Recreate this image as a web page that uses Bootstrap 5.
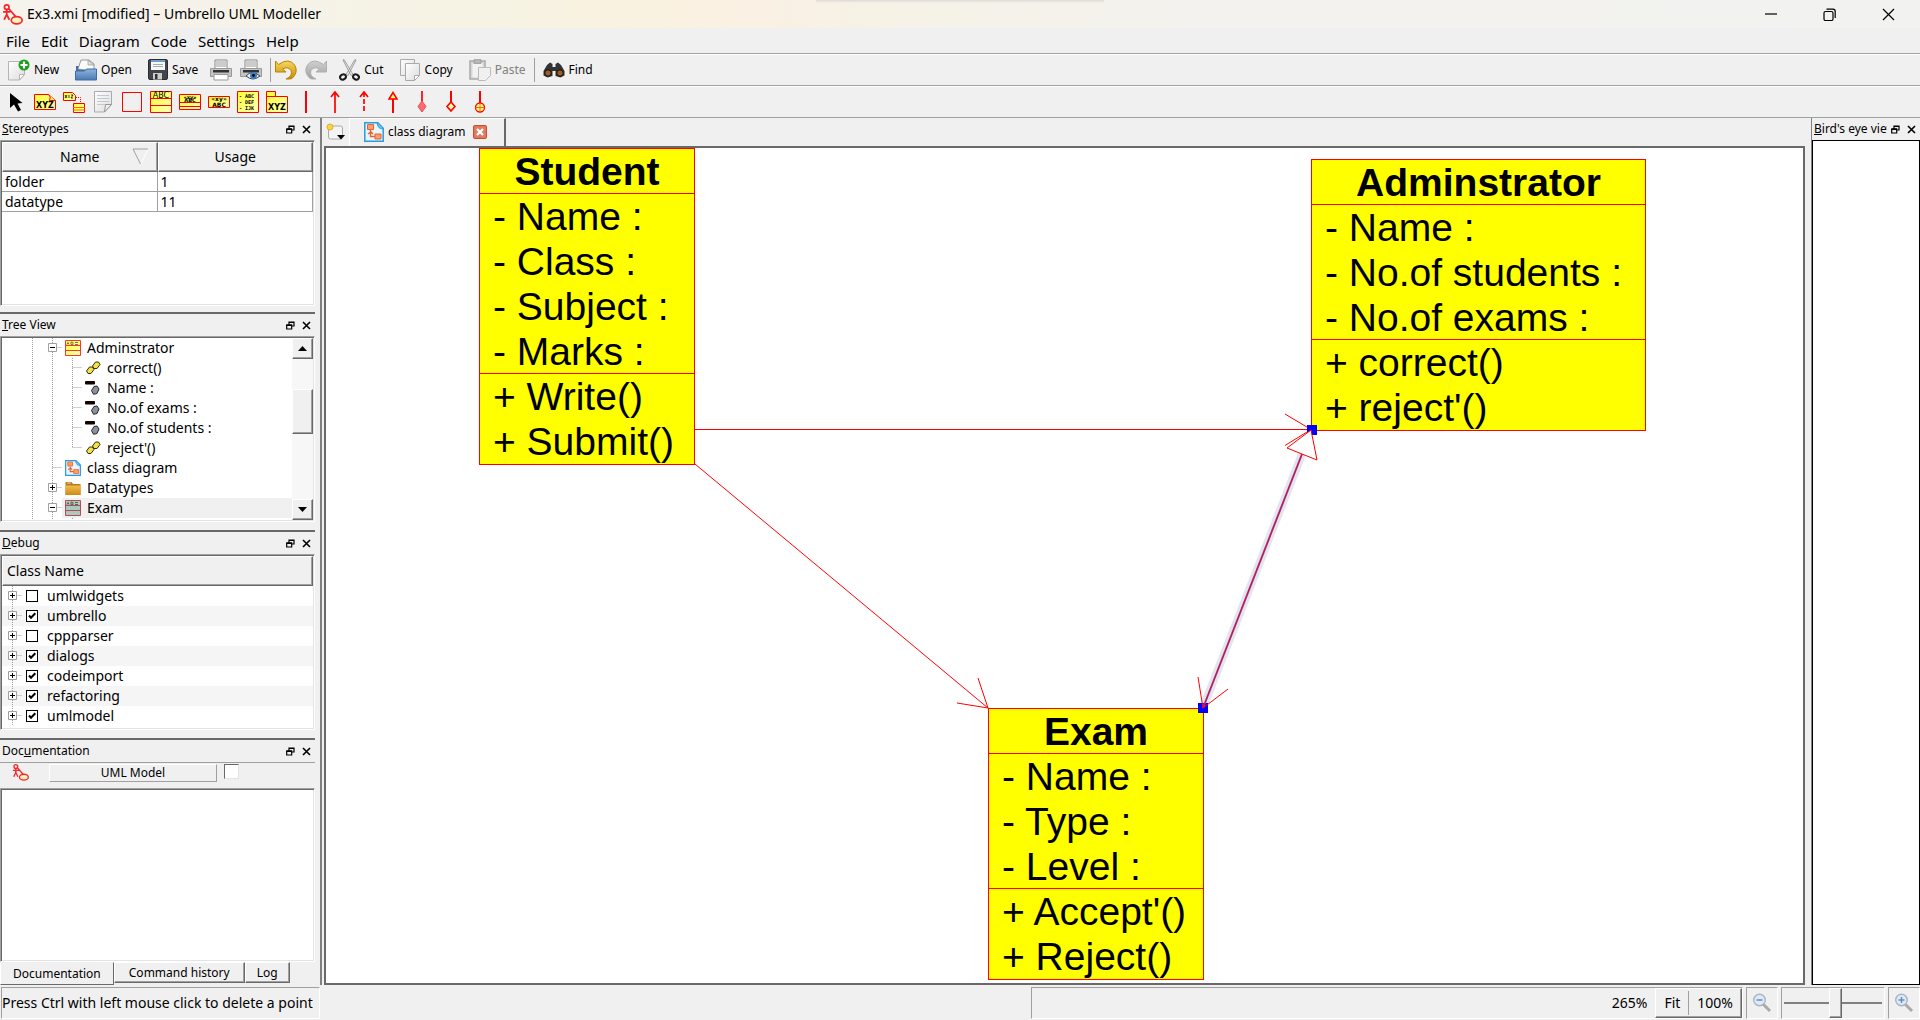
<!DOCTYPE html>
<html lang="en">
<head>
<meta charset="utf-8">
<meta name="viewport" content="width=device-width, initial-scale=1">
<title>Ex3.xmi [modified] – Umbrello UML Modeller</title>
<link href="https://cdn.jsdelivr.net/npm/bootstrap@5.3.0/dist/css/bootstrap.min.css" rel="stylesheet">
<style>
  body { background: #f0f0f0; color: #000; font: 14px/20px "Noto Sans", "Open Sans", sans-serif; }
  svg { display: block; flex: none; }
  .titlebar { height: 28px; padding: 0 2px; background: linear-gradient(#dcdad6, transparent) 50% 0/15% 3px no-repeat, linear-gradient(90deg, #f6f2ee, #f6f3e4 25%, #faf2e0 33%, #faf0e4 40%, #f6f2e6 46%, #f3f2ee 62%, #f2f2f0); }
  .titlebar .caption { font-size: 14px; }
  .winbtn { width: 59px; height: 28px; }
  .flat { border: 0; background: none; padding: 0; color: #000; display: flex; align-items: center; }
  .menus { height: 25px; padding-left: 6px; gap: 11px; }
  .menus a { color: #000; text-decoration: none; font-size: 15px; }
  .tools { height: 32px; border-top: 1px solid #a0a0a0; box-shadow: inset 0 1px #fff; font-size: 12px; }
  .tools .flat { font-size: 12px; gap: 4px; }
  .tools .off { color: #808080; }
  .shapes { padding-left: 5px; gap: 7px; }
  .vsep { width: 1px; height: 24px; background: #a0a0a0; }
  .workarea { min-height: 0; border-top: 1px solid #a0a0a0; }
  .leftdock { width: 320px; padding-right: 5px; }
  .dock { display: flex; flex-direction: column; border-top: 2px solid #696969; min-height: 0; }
  .dock-stereo { flex: 194 1 194px; border-top: 0; padding-bottom: 6px; }
  .dock-tree { flex: 218 1 218px; padding-bottom: 8px; }
  .dock-debug { flex: 208 1 208px; padding-bottom: 8px; }
  .dock-doc { flex: 247 1 247px; }
  .dock-head { height: 22px; padding: 0 1px 0 2px; font-size: 12px; flex: none; }
  .dock-head .flat { width: 16px; height: 16px; justify-content: center; }
  .sunken { background: #fff; border: 1px solid; border-color: #a0a0a0 #fff #fff #a0a0a0; box-shadow: inset 1px 1px #696969, inset -1px -1px #e3e3e3; padding: 1px; overflow: hidden; }
  .raised { background: #f0f0f0; border: 1px solid; border-color: #fff #696969 #696969 #fff; box-shadow: inset -1px -1px #a0a0a0; }
  .stereo { width: 100%; border-collapse: separate; border-spacing: 0; table-layout: fixed; }
  .stereo th { height: 30px; font-weight: 400; text-align: center; padding: 0; position: relative; }
  .stereo th svg { position: absolute; right: 8px; top: 5px; }
  .stereo td { height: 20px; line-height: 19px; padding: 0 3px; border-right: 1px solid #a0a0a0; border-bottom: 1px solid #a0a0a0; }
  .trow { height: 20px; white-space: nowrap; }
  .trow .indent { width: 20px; }
  .trow .ticon { margin: 0 6px 0 3px; }
  .hot { background: #f0f0f0; }
  .sbar { width: 21px; background: #f7f7f7; }
  .sbar button { width: 21px; height: 21px; padding: 0; display: flex; align-items: center; justify-content: center; }
  .sbar .before { flex: 31; }
  .sbar .thumb { flex: 45; }
  .sbar .after { flex: 68; }
  .tick { appearance: none; width: 12px; height: 12px; margin: 0 9px 0 4px; border: 1px solid #000; background: #fff; flex: none; }
  .tick:checked { background: #fff url("data:image/svg+xml,%3Csvg xmlns='http://www.w3.org/2000/svg' viewBox='0 0 10 10'%3E%3Cpath d='M2 4.5l2 2.2 4.3-4.4' fill='none' stroke='%23000' stroke-width='2'/%3E%3C/svg%3E"); }
  .dbg-head { height: 30px; }
  .dbg { height: 20px; }
  .dbg:nth-child(odd) { background: #f5f5f5; }
  .docrow { height: 26px; border-top: 1px solid #a0a0a0; padding: 1px 0 0 12px; gap: 20px; flex: none; }
  .docbtn { width: 168px; height: 18px; padding: 0; border: 1px solid; border-color: #fff #a0a0a0 #a0a0a0 #fff; background: #f0f0f0; font-size: 12px; line-height: 16px; }
  .doccheck { appearance: none; width: 15px; height: 15px; margin: 0 0 0 -13px; background: #fff; border: 1px solid; border-color: #696969 #e3e3e3 #e3e3e3 #696969; }
  .docarea { resize: none; width: 100%; display: block; }
  .dtabs { height: 23px; flex: none; }
  .dtab { font-size: 12px; height: 21px; line-height: 18px; padding: 0 14px; }
  .dtab:last-child { padding: 0 11px; }
  .dtab.cur { height: 23px; line-height: 20px; border: 1px solid; border-color: transparent #696969 #696969 #fff; background: #f0f0f0; padding: 0 12px; }
  .central { border-left: 2px solid #808080; }
  .tabstrip { height: 28px; padding-left: 4px; }
  .doctab { height: 28px; border-left: 1px solid #fff; border-top: 1px solid #fff; border-right: 2px solid #696969; padding: 0 17px 1px 14px; font-size: 12px; gap: 4px; }
  .view { margin-left: 2px; border: 2px solid #696969; background: #fff; position: relative; overflow: hidden; }
  .wires { position: absolute; left: 0; top: 0; width: 100%; height: 100%; overflow: visible; }
  .uml { position: absolute; background: #ff0; border: 1px solid #f00; font: 39px/45px "Liberation Sans", Arial, sans-serif; white-space: pre; }
  .uml > div { padding-left: 13px; border-top: 1px solid #f00; margin-top: -1px; }
  .uml > .cname { font-weight: 700; text-align: center; padding: 0; border: 0; margin: 0; }
  .uml-student { left: 153px; top: 0; width: 216px; }
  .uml-admin { left: 985px; top: 11px; width: 335px; }
  .uml-exam { left: 662px; top: 560px; width: 216px; }
  .bird { width: 115px; padding-left: 6px; }
  .bird .dock { border-top: 0; border-left: 1px solid #808080; }
  .birdview { border: 1px solid #000; background: #fff; }
  .status { height: 35px; padding: 2px 0 1px 1px; gap: 3px; }
  .cell { border: 1px solid; border-color: #a0a0a0 #fff #fff #a0a0a0; height: 32px; }
  .hint { width: 319px; }
  .zoomcell { width: 712px; }
  .glass { width: 32px; }
  .zoomer { width: 104px; }
  .zoomer input { appearance: none; width: 100%; height: 30px; margin: 0; background: linear-gradient(#808080, #808080) center/98px 2px no-repeat; }
  .zoomer input::-webkit-slider-thumb { appearance: none; width: 13px; height: 30px; background: #f0f0f0; border: 1px solid; border-color: #fff #696969 #696969 #fff; box-shadow: inset -1px -1px #a0a0a0; }
</style>
<script src="https://cdn.jsdelivr.net/npm/bootstrap@5.3.0/dist/js/bootstrap.bundle.min.js"></script>
</head>
<body class="vh-100 d-flex flex-column overflow-hidden">

<svg width="0" height="0" class="position-absolute" aria-hidden="true">
  <defs>
    <linearGradient id="yel" x1="0" y1="0" x2="1" y2="1"><stop offset="0" stop-color="#ffff30"/><stop offset="1" stop-color="#ffffb8"/></linearGradient>
    <linearGradient id="paper" x1="0" y1="0" x2="1" y2="1"><stop offset="0" stop-color="#fff"/><stop offset="1" stop-color="#dcdcdc"/></linearGradient>
    <linearGradient id="blue" x1="0" y1="0" x2="0" y2="1"><stop offset="0" stop-color="#8fb4dc"/><stop offset="1" stop-color="#4a7ab4"/></linearGradient>
    <linearGradient id="gold" x1="0" y1="0" x2="0" y2="1"><stop offset="0" stop-color="#f8d860"/><stop offset="1" stop-color="#c88a00"/></linearGradient>
    <linearGradient id="orange" x1="0" y1="0" x2="0" y2="1"><stop offset="0" stop-color="#f2bc50"/><stop offset="1" stop-color="#cf8a14"/></linearGradient>
    <linearGradient id="grey" x1="0" y1="0" x2="0" y2="1"><stop offset="0" stop-color="#d0d0d0"/><stop offset="1" stop-color="#a0a0a0"/></linearGradient>
  </defs>
  <symbol id="i-app" viewBox="0 0 20 20"><g fill="none" stroke="#f3262a" stroke-width="1.6"><circle cx="4.500" cy="3" r="2.200"/><path d="M4.500 5v5M1 7.500h7M4.500 10L2 15M4.500 10L7 15M6.500 4.500L13 12"/><ellipse cx="14" cy="15.500" rx="5.200" ry="3.400" fill="#fff4c0"/></g></symbol>
  <symbol id="i-float" viewBox="0 0 9 9"><path d="M3 1h5v4H3zM3 1.500h5" fill="none" stroke="#000" stroke-width="1.200"/><path d="M.7 4h5v4h-5z" fill="#f0f0f0" stroke="#000" stroke-width="1.200"/><path d="M.5 4.200h5.500" stroke="#000" stroke-width="1.600"/></symbol>
  <symbol id="i-x" viewBox="0 0 9 9"><path d="M1 1l7 7M8 1L1 8" stroke="#000" stroke-width="1.600"/></symbol>
  <symbol id="g-v" viewBox="0 0 20 20"><path d="M10.500 0v20" stroke="#a0a0a0" stroke-dasharray="1 1"/></symbol>
  <symbol id="g-t" viewBox="0 0 20 20"><path d="M10.500 0v20M10.500 9.500H20" stroke="#a0a0a0" stroke-dasharray="1 1"/></symbol>
  <symbol id="g-l" viewBox="0 0 20 20"><path d="M10.500 0v10M10.500 9.500H20" stroke="#a0a0a0" stroke-dasharray="1 1"/></symbol>
  <symbol id="g-minus" viewBox="0 0 20 20"><path d="M10.500 0v20M10.500 9.500H20" stroke="#a0a0a0" stroke-dasharray="1 1"/><path d="M6.500 5.500h8v8h-8z" fill="#fff" stroke="#a0a0a0"/><path d="M8 9.500h5" stroke="#000"/></symbol>
  <symbol id="g-plus" viewBox="0 0 20 20"><path d="M10.500 0v20M10.500 9.500H20" stroke="#a0a0a0" stroke-dasharray="1 1"/><path d="M6.500 5.500h8v8h-8z" fill="#fff" stroke="#a0a0a0"/><path d="M8 9.500h5M10.500 7v5" stroke="#000"/></symbol>
  <symbol id="t-class" viewBox="0 0 16 16"><path d="M.5.500h15v15H.5z" fill="url(#yel)" stroke="#f33"/><path d="M0 5.500h16M0 10.500h16" stroke="#f33"/><path d="M2 4.500l1-2 1 2M6 2v2.500h2V2.500zM10 2.500h3M10 4.500h3" stroke="#775" fill="none"/></symbol>
  <symbol id="t-exam" viewBox="0 0 16 16"><path d="M.5.500h15v15H.5z" fill="#a9cbbd" stroke="#b64a56"/><path d="M0 5.500h16M0 10.500h16" stroke="#b64a56"/><path d="M2 4.500l1-2 1 2M6 2v2.500h2V2.500zM10 2.500h3M10 4.500h3" stroke="#565" fill="none"/></symbol>
  <symbol id="t-op" viewBox="0 0 16 16"><path d="M7.500 6l3-4h3l1.500 2.500-3 4H9zM1.500 11l3-4h3L9 9.500l-3 4H3z" fill="#f4e04a" stroke="#3a3000"/></symbol>
  <symbol id="t-attr" viewBox="0 0 16 16"><rect x="0" y="1" width="10" height="3.500" rx="1" fill="#100"/><path d="M6.500 10.500l2.500-4 3-.500 2 3-2 4.500-3.500.800z" fill="#8f8fa0" stroke="#222"/></symbol>
  <symbol id="t-diag" viewBox="0 0 20 20"><path d="M.8.800h13l5.400 5.400v13H.8z" fill="#e8f5fd" stroke="#2a9be0" stroke-width="1.500"/><path d="M13 .8c1 3 1 6 6 6" fill="#6ec0f4" stroke="#2a9be0"/><path d="M3.500 2.500h6v5h-6zM11 12h6v5h-6z" fill="#f7a070" stroke="#e8622a"/><path d="M6.500 8v6.500H11M4 12l3-2 2 2" fill="none" stroke="#e8622a" stroke-width="1.400"/></symbol>
  <symbol id="t-folder" viewBox="0 0 16 16"><path d="M.5 2h6l1.500 2h7.500v11H.5z" fill="#b87a1c"/><path d="M.5 5.500h15V15H.5z" fill="url(#orange)"/><path d="M2 3h4" stroke="#f6d68c"/></symbol>
  <symbol id="i-glass" viewBox="0 0 20 20"><path d="M11 11l7 7" stroke="#aaa" stroke-width="3"/><circle cx="7.500" cy="7" r="5.800" fill="#dcebfa" stroke="#a8b4c0" stroke-width="1.400"/></symbol>
</svg>

<header class="titlebar d-flex align-items-center flex-shrink-0">
  <svg width="21" height="21" class="me-1"><use href="#i-app"/></svg>
  <span class="caption">Ex3.xmi [modified] – Umbrello UML Modeller</span>
  <div class="ms-auto d-flex">
    <button class="flat winbtn justify-content-center" aria-label="Minimize"><svg width="12" height="12"><path d="M0 6h12" stroke="#000" stroke-width="1.200"/></svg></button>
    <button class="flat winbtn justify-content-center" aria-label="Restore"><svg width="13" height="13" fill="none" stroke="#000" stroke-width="1.200"><rect x="1" y="3.500" width="9" height="9" rx="1.500"/><path d="M3.500 1.200h6.500q2.200 0 2.200 2.200v6.500"/></svg></button>
    <button class="flat winbtn justify-content-center" aria-label="Close"><svg width="13" height="13" stroke="#000" stroke-width="1.200"><path d="M1 1l11 11M12 1L1 12"/></svg></button>
  </div>
</header>

<nav class="menus d-flex align-items-center flex-shrink-0">
  <a href="#">File</a><a href="#">Edit</a><a href="#">Diagram</a><a href="#">Code</a><a href="#">Settings</a><a href="#">Help</a>
</nav>

<div class="tools d-flex align-items-center flex-shrink-0 ps-2">
  <button class="flat me-3"><svg width="22" height="22"><path d="M.5 2.500h16v13l-5 5.500H.5z" fill="url(#paper)" stroke="#b4b4b4"/><path d="M16.500 15.500h-5V21z" fill="#fff" stroke="#b4b4b4"/><circle cx="16" cy="6" r="5.500" fill="#18a018"/><path d="M16 2.500v7M12.500 6h7" stroke="#fff" stroke-width="2.200"/></svg>New</button>
  <button class="flat me-3"><svg width="22" height="22"><path d="M1 7h6l2 3h12v11H1z" fill="#3f6ca8"/><path d="M3 10L6 1h8l5 4v7z" fill="#fafafa" stroke="#999"/><path d="M13 1v5h6z" fill="#ddd" stroke="#999" stroke-width=".7"/><path d="M.5 12h9l2-2h10v11H.5z" fill="url(#blue)" stroke="#3f6ca8"/></svg>Open</button>
  <button class="flat me-2"><svg width="20" height="21"><rect x=".5" y=".5" width="19" height="20" rx="1.500" fill="#42464c" stroke="#2a2c30"/><path d="M3 1h14v10H3z" fill="#f4f6f8"/><path d="M3 1h14v2H3z" fill="#6e9ccc"/><path d="M5 5.500h10M5 7.500h10" stroke="#aaa"/><path d="M5 14h9v6.500H5z" fill="#ccc"/><path d="M7 15h2.500v5H7z" fill="#333"/></svg>Save</button>
  <button class="flat ms-1 me-2" aria-label="Print"><svg width="22" height="22"><path d="M5 1h12v9H5z" fill="#fff" stroke="#888"/><path d="M6 3h10M6 5h10M6 7h10" stroke="#999"/><path d="M.5 9.500h21v8H.5z" fill="#c4c4c4" stroke="#999"/><path d="M3 11h16v2.500H3z" fill="#333"/><path d="M4 15.500h14v5.500H4z" fill="#fff" stroke="#999"/></svg></button>
  <button class="flat me-2" aria-label="Print preview"><svg width="22" height="22"><path d="M5 1h12v9H5z" fill="#fff" stroke="#888"/><path d="M6 3h10M6 5h10M6 7h10" stroke="#999"/><path d="M.5 9.500h21v8H.5z" fill="#c4c4c4" stroke="#999"/><path d="M3 11h16v2.500H3z" fill="#333"/><path d="M6 17q6-7 14 0-7 6-14 0z" fill="#eef" stroke="#345"/><circle cx="13.500" cy="16.500" r="3.500" fill="#3a7ec0"/><circle cx="13.500" cy="16.500" r="1.400"/></svg></button>
  <span class="vsep me-1"></span>
  <button class="flat me-2" aria-label="Undo"><svg width="22" height="20"><path d="M.5 1l3 3.500Q14-3 20 5.500q3.500 7-3 13-2 .8-6 .5 7-3 5-8.500-3-4.500-8.500-1.500L11 12H.5z" fill="url(#gold)" stroke="#b88400"/></svg></button>
  <button class="flat me-2" aria-label="Redo"><svg width="22" height="20"><path transform="matrix(-1 0 0 1 22 0)" d="M.5 1l3 3.500Q14-3 20 5.500q3.500 7-3 13-2 .8-6 .5 7-3 5-8.500-3-4.500-8.500-1.500L11 12H.5z" fill="url(#grey)" stroke="#b0b0b0"/></svg></button>
  <button class="flat ms-1 me-3"><svg width="21" height="22"><path d="M4 1l1-.500 9 15-2 1zM17 1l-1-.500-9 15 2 1z" fill="#eee" stroke="#888" stroke-width=".8"/><g fill="none" stroke="#1a1a1a" stroke-width="2"><ellipse cx="4" cy="18" rx="3" ry="2.500" transform="rotate(-25 4 18)"/><ellipse cx="17" cy="18" rx="3" ry="2.500" transform="rotate(25 17 18)"/></g></svg>Cut</button>
  <button class="flat me-3"><svg width="21" height="22"><path d="M.5.500h14v16H.5z" fill="url(#paper)" stroke="#aaa"/><path d="M5.500 4.500h14v12l-5 5h-9z" fill="url(#paper)" stroke="#aaa"/><path d="M19.500 16.500h-5v5z" fill="#fff" stroke="#aaa"/></svg>Copy</button>
  <button class="flat off me-2" disabled><svg width="22" height="22"><path d="M1 2h15v18H1z" fill="#d8d8d8" stroke="#aaa" stroke-width="1.500"/><path d="M3.500 4.500h10v14h-10z" fill="#f2f2f2"/><path d="M5 .8h7v3.500H5z" fill="#bbb" stroke="#999"/><path d="M9.500 8.500h12v8l-5 5h-7z" fill="#f0f0f0" stroke="#bbb"/></svg>Paste</button>
  <span class="vsep me-2"></span>
  <button class="flat"><svg width="22" height="16"><path d="M4 3l3-2.500 2.500 1.500V5h3V2L15 .5 18 3l3.500 6v4.500l-4 2-5-1.500V9h-3v5l-5 1.500-4-2V9z" fill="#333"/><circle cx="5" cy="11" r="3.200" fill="#a35a24" stroke="#111"/><circle cx="17" cy="11" r="3.200" fill="#a35a24" stroke="#111"/></svg>Find</button>
</div>

<div class="tools shapes d-flex align-items-center flex-shrink-0">
  <button class="flat" aria-label="Select"><svg width="22" height="22"><path d="M5 2v15l4-3.500 4 7 3-1.500-3.500-6.500 5-.5z"/></svg></button>
  <button class="flat" aria-label="Note"><svg width="22" height="22"><path d="M.500 3.500h14l7 6v9H.5z" fill="url(#yel)" stroke="#f00"/><path d="M14.500 3.500q3 2 1 6h6" fill="#ffef60" stroke="#f00"/><text x="11" y="16.500" text-anchor="middle" font-family="DejaVu Sans" font-size="8" font-weight="700">XYZ</text></svg></button>
  <button class="flat" aria-label="Anchor"><svg width="22" height="22"><path d="M.500 1.500h9l3 3v5H.5z" fill="url(#yel)" stroke="#f00"/><path d="M2 4l2 3M4 4L2 7M6 4v3M8 4h2L8 7h2" stroke="#000" stroke-width=".8" fill="none"/><path d="M13 6.500h4.500V12" fill="none" stroke="#f00" stroke-dasharray="1 1"/><path d="M10.500 12.500h11v9h-11z" fill="url(#yel)" stroke="#f00"/><path d="M10 16.500h12M10 19h12" stroke="#f60"/></svg></button>
  <button class="flat" aria-label="Text line"><svg width="22" height="22"><path d="M2.500.500h17v13l-7 7.500h-10z" fill="url(#paper)" stroke="#aaa"/><path d="M5 4.500h12M5 7.500h12M5 10.500h12M5 13.500h8" stroke="#c0c8d4"/><path d="M19.500 13.500h-6L12.500 21z" fill="#eee" stroke="#999"/></svg></button>
  <button class="flat" aria-label="Box"><svg width="22" height="22"><path d="M1.500 1.500h19v19h-19z" fill="none" stroke="#f00"/></svg></button>
  <button class="flat" aria-label="Class"><svg width="22" height="22"><path d="M.500.500h21v21H.5z" fill="url(#yel)" stroke="#f00"/><path d="M0 7.500h22M0 14.500h22" stroke="#f00"/><text x="11" y="6.500" text-anchor="middle" font-family="DejaVu Sans" font-size="8">ABC</text></svg></button>
  <button class="flat" aria-label="Interface"><svg width="22" height="22"><path d="M.500 3.500h21v15H.5z" fill="url(#yel)" stroke="#f00"/><path d="M0 11.500h22M0 15.500h22" stroke="#f00"/><text x="11" y="7.500" text-anchor="middle" font-family="DejaVu Sans" font-size="5" font-weight="700">«xy»</text><text x="11" y="11" text-anchor="middle" font-family="DejaVu Sans" font-size="5" font-weight="700">ABC</text></svg></button>
  <button class="flat" aria-label="Datatype"><svg width="22" height="22"><path d="M.500 5.500h21v11H.5z" fill="url(#yel)" stroke="#f00"/><text x="11" y="10" text-anchor="middle" font-family="DejaVu Sans" font-size="6" font-weight="700">«xy»</text><text x="11" y="15.500" text-anchor="middle" font-family="DejaVu Sans" font-size="6" font-weight="700">ABC</text></svg></button>
  <button class="flat" aria-label="Enum"><svg width="22" height="22"><path d="M.500.500h21v21H.5z" fill="url(#yel)" stroke="#f00"/><g font-family="DejaVu Sans Mono" font-size="5" font-weight="700"><text x="2" y="6.500">- ABC</text><text x="2" y="12.500">- DEF</text><text x="2" y="19">- IJK</text></g></svg></button>
  <button class="flat" aria-label="Package"><svg width="22" height="22"><path d="M.500.500h9v5h12v16H.5z" fill="url(#yel)" stroke="#f00"/><path d="M0 5.500h10" stroke="#f00"/><text x="11" y="19" text-anchor="middle" font-family="DejaVu Sans" font-size="8" font-weight="700">XYZ</text></svg></button>
  <button class="flat" aria-label="Association"><svg width="22" height="22"><path d="M11 0v22" stroke="#f00" stroke-width="2"/></svg></button>
  <button class="flat" aria-label="Directed association"><svg width="22" height="22"><path d="M11 1v21M7 6l4-5 4 5" fill="none" stroke="#f00" stroke-width="1.700"/></svg></button>
  <button class="flat" aria-label="Dependency"><svg width="22" height="22"><path d="M11 1v21" stroke="#f00" stroke-width="1.700" stroke-dasharray="5 2"/><path d="M7 6l4-5 4 5" fill="none" stroke="#f00" stroke-width="1.700"/></svg></button>
  <button class="flat" aria-label="Generalization"><svg width="22" height="22"><path d="M11 8v14" stroke="#f00" stroke-width="2"/><path d="M7 8l4-6.500L15 8z" fill="#ff6" stroke="#f00" stroke-width="1.500"/></svg></button>
  <button class="flat" aria-label="Composition"><svg width="22" height="22"><path d="M11 0v12" stroke="#f00" stroke-width="1.700"/><path d="M11 10l4 5.500-4 5.500-4-5.500z" fill="#ff6870" stroke="#e85058"/></svg></button>
  <button class="flat" aria-label="Aggregation"><svg width="22" height="22"><path d="M11 0v12" stroke="#f00" stroke-width="2"/><path d="M11 11l4 4.500-4 4.500-4-4.500z" fill="#ffa" stroke="#f00" stroke-width="1.600"/></svg></button>
  <button class="flat" aria-label="Containment"><svg width="22" height="22"><path d="M11 0v12" stroke="#f00" stroke-width="2"/><circle cx="11" cy="16.500" r="4.500" fill="#ff8" stroke="#f00" stroke-width="1.300"/><path d="M11 12v9M6.500 16.500h9" stroke="#f60"/></svg></button>
</div>

<main class="workarea d-flex flex-grow-1">
  <aside class="leftdock d-flex flex-column flex-shrink-0">
    <section class="dock dock-stereo">
      <div class="dock-head d-flex align-items-center"><span class="me-auto"><u>S</u>tereotypes</span><button class="flat" aria-label="Float"><svg width="9" height="9"><use href="#i-float"/></svg></button><button class="flat" aria-label="Close"><svg width="9" height="9"><use href="#i-x"/></svg></button></div>
      <div class="sunken flex-grow-1">
        <table class="stereo">
          <thead><tr><th class="raised">Name<svg width="17" height="17" fill="none"><path d="M16 1L9 16" stroke="#fff"/><path d="M16 1H1l7.500 15" stroke="#a0a0a0"/></svg></th><th class="raised">Usage</th></tr></thead>
          <tbody><tr><td>folder</td><td>1</td></tr><tr><td>datatype</td><td>11</td></tr></tbody>
        </table>
      </div>
    </section>
    <section class="dock dock-tree">
      <div class="dock-head d-flex align-items-center"><span class="me-auto"><u>T</u>ree View</span><button class="flat" aria-label="Float"><svg width="9" height="9"><use href="#i-float"/></svg></button><button class="flat" aria-label="Close"><svg width="9" height="9"><use href="#i-x"/></svg></button></div>
      <div class="sunken flex-fill d-flex overflow-hidden">
        <div class="flex-grow-1 overflow-hidden" id="tree"></div>
        <div class="sbar d-flex flex-column">
          <button class="raised" aria-label="Scroll up"><svg width="9" height="5"><path d="M0 5l4.500-5L9 5z"/></svg></button>
          <div class="before"></div><div class="raised thumb"></div><div class="after"></div>
          <button class="raised" aria-label="Scroll down"><svg width="9" height="5"><path d="M0 0l4.500 5L9 0z"/></svg></button>
        </div>
      </div>
    </section>
    <section class="dock dock-debug">
      <div class="dock-head d-flex align-items-center"><span class="me-auto"><u>D</u>ebug</span><button class="flat" aria-label="Float"><svg width="9" height="9"><use href="#i-float"/></svg></button><button class="flat" aria-label="Close"><svg width="9" height="9"><use href="#i-x"/></svg></button></div>
      <div class="sunken flex-grow-1" id="debug"><div class="raised dbg-head ps-1 d-flex align-items-center">Class Name</div></div>
    </section>
    <section class="dock dock-doc">
      <div class="dock-head d-flex align-items-center"><span class="me-auto">Doc<u>u</u>mentation</span><button class="flat" aria-label="Float"><svg width="9" height="9"><use href="#i-float"/></svg></button><button class="flat" aria-label="Close"><svg width="9" height="9"><use href="#i-x"/></svg></button></div>
      <div class="docrow d-flex"><svg width="17" height="17"><use href="#i-app"/></svg><button class="docbtn">UML Model</button><input type="checkbox" class="doccheck" aria-label="Modified"></div>
      <textarea class="sunken flex-grow-1 docarea" aria-label="Documentation"></textarea>
      <div class="d-flex dtabs"><button class="dtab cur">Documentation</button><button class="dtab raised">Command history</button><button class="dtab raised">Log</button></div>
    </section>
  </aside>

  <section class="central d-flex flex-column flex-grow-1">
    <div class="tabstrip d-flex align-items-center flex-shrink-0">
      <button class="flat" aria-label="New diagram"><svg width="23" height="18"><rect x="2.500" y="3" width="14" height="13" rx="2" fill="#f4f4f4" stroke="#aaa"/><circle cx="4" cy="4" r="3" fill="#f6d34a" stroke="#e0b020"/><path d="M11 12h8l-4 4.500z"/></svg></button>
      <div class="doctab d-flex align-items-center"><svg width="20" height="20"><use href="#t-diag"/></svg><span>class diagram</span><button class="flat ms-1" aria-label="Close tab"><svg width="14" height="14"><rect width="14" height="14" rx="2" fill="#c84a32"/><rect x="1" y="1" width="12" height="12" rx="1" fill="#e27a60"/><path d="M4 4l6 6M10 4l-6 6" stroke="#fff" stroke-width="2.400"/></svg></button></div>
    </div>
    <div class="view flex-grow-1">
      <div class="uml uml-student"><div class="cname">Student</div><div>- Name :
- Class :
- Subject :
- Marks :</div><div>+ Write()
+ Submit()</div></div>
      <div class="uml uml-admin"><div class="cname">Adminstrator</div><div>- Name :
- No.of students :
- No.of exams :</div><div>+ correct()
+ reject'()</div></div>
      <div class="uml uml-exam"><div class="cname">Exam</div><div>- Name :
- Type :
- Level :</div><div>+ Accept'()
+ Reject()</div></div>
      <svg class="wires" fill="none" stroke="#f00">
        <path d="M369 281.500H985M369 316L662 560M959 266l26 15.500-26 16M652 530l10 30-31-5"/>
        <path d="M976 306L877 560" stroke="#e4e4ea" stroke-width="8"/>
        <path d="M981 277h10v10h-10zM872 555h10v10h-10z" fill="#00f" stroke="none"/>
        <path d="M976 306L877 560" stroke="#6a5ae0" stroke-width="2"/>
        <path d="M976 306L877 560M872 529l5 31 25-19"/>
        <path d="M985 282l-24 18 30 12z" fill="#fff"/>
      </svg>
    </div>
  </section>

  <aside class="bird d-flex flex-shrink-0">
    <section class="dock flex-grow-1 overflow-hidden">
      <div class="dock-head d-flex align-items-center"><span class="me-auto text-nowrap overflow-hidden"><u>B</u>ird's eye view</span><button class="flat flex-shrink-0" aria-label="Float"><svg width="9" height="9"><use href="#i-float"/></svg></button><button class="flat flex-shrink-0" aria-label="Close"><svg width="9" height="9"><use href="#i-x"/></svg></button></div>
      <div class="birdview flex-grow-1"></div>
    </section>
  </aside>
</main>

<footer class="status d-flex flex-shrink-0">
  <div class="cell hint d-flex align-items-center text-nowrap">Press Ctrl with left mouse click to delete a point</div>
  <div class="flex-grow-1"></div>
  <div class="cell zoomcell d-flex align-items-center justify-content-end"><span class="me-2">265%</span><div class="raised d-flex align-items-center h-100 px-1 gap-1"><button class="flat px-1">Fit</button><span class="vsep"></span><button class="flat px-1">100%</button></div></div>
  <button class="flat cell justify-content-center glass" aria-label="Zoom out"><svg width="20" height="20"><use href="#i-glass"/><path d="M4.500 7h6" stroke="#6a8cb8" stroke-width="1.500"/></svg></button>
  <div class="cell zoomer"><input type="range" aria-label="Zoom" value="53"></div>
  <button class="flat cell justify-content-center glass" aria-label="Zoom in"><svg width="20" height="20"><use href="#i-glass"/><path d="M4.500 7h6M7.500 4v6" stroke="#6a8cb8" stroke-width="1.500"/></svg></button>
</footer>

<script>
  const icon = (id, size, cls = '') => `<svg width="${size}" height="${size}" class="${cls}"><use href="#${id}"/></svg>`;
  const kids = [['t-op', 'correct()'], ['t-attr', 'Name :'], ['t-attr', 'No.of exams :'], ['t-attr', 'No.of students :'], ['t-op', "reject'()"]];
  const rows = [['g-minus', 't-class', 'Adminstrator'],
    ...kids.map((k, i) => ['g-v', i === 4 ? 'g-l' : 'g-t', ...k]),
    ['g-t', 't-diag', 'class diagram'], ['g-plus', 't-folder', 'Datatypes'], ['g-minus', 't-exam', 'Exam']];
  document.getElementById('tree').innerHTML = rows.map(r => {
    const guides = r.slice(0, -2).map(g => icon(g, 20)).join('');
    const [ic, text] = r.slice(-2);
    return `<div class="trow d-flex align-items-center"><span class="indent flex-shrink-0"></span>${icon('g-v', 20)}${guides}<span class="d-flex align-items-center flex-grow-1${text === 'Exam' ? ' hot' : ''}">${icon(ic, 16, 'ticon')}${text}</span></div>`;
  }).join('') + `<div class="trow d-flex"><span class="indent flex-shrink-0"></span>${icon('g-v', 20)}${icon('g-v', 20)}${icon('g-v', 20)}</div>`;
  const mods = [['umlwidgets', 0], ['umbrello', 1], ['cppparser', 0], ['dialogs', 1], ['codeimport', 1], ['refactoring', 1], ['umlmodel', 1]];
  document.getElementById('debug').insertAdjacentHTML('beforeend', mods.map(([n, on]) =>
    `<div class="dbg d-flex align-items-center">${icon('g-plus', 20)}<input type="checkbox" class="tick" id="m-${n}"${on ? ' checked' : ''}><label for="m-${n}">${n}</label></div>`).join(''));
</script>
</body>
</html>
